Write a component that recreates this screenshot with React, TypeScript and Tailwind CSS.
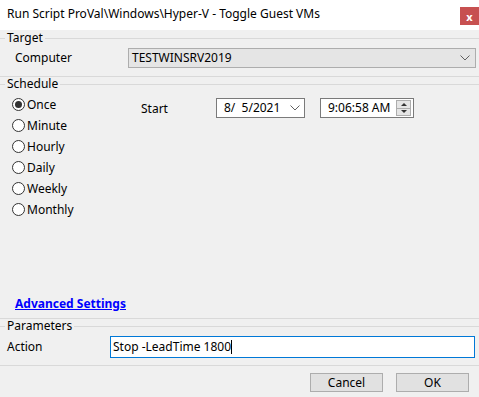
import React from 'react';

const font = { fontFamily: '"Noto Sans", "Open Sans", Arial, sans-serif' };

const Chevron = ({ className = '' }: { className?: string }) => (
  <svg width="10" height="6" viewBox="0 0 10 6" className={className}>
    <polyline points="0.5,0.5 5,5 9.5,0.5" fill="none" stroke="#606060" strokeWidth="1" />
  </svg>
);

const GroupHeader = ({ label }: { label: string }) => (
  <div className="flex items-center h-[14px]">
    <div className="w-[5px] border-t border-[#d9d9d9]" />
    <span className="px-[2px] text-[12px] leading-none text-black">{label}</span>
    <div className="flex-1 border-t border-[#d9d9d9]" />
  </div>
);

const Radio = ({ label, checked = false }: { label: string; checked?: boolean }) => (
  <div className="flex items-center h-[21px] gap-[2px]">
    <div className="w-[13px] h-[13px] rounded-full border border-[#333] bg-white flex items-center justify-center">
      {checked && <div className="w-[7px] h-[7px] rounded-full bg-[#333]" />}
    </div>
    <span className="text-[12px] leading-none">{label}</span>
  </div>
);

export default function App() {
  const schedules = ['Once', 'Minute', 'Hourly', 'Daily', 'Weekly', 'Monthly'];

  return (
    <div className="w-[479px] h-[397px] bg-[#f0f0f0] overflow-hidden text-black" style={font}>
      {/* Title bar */}
      <div className="h-[30px] bg-white flex items-start">
        <div className="flex-1 pl-[7px] pt-[8px] text-[12px] leading-none">
          Run Script ProVal\Windows\Hyper-V - Toggle Guest VMs
        </div>
        <div className="mt-[7px] w-[19px] h-[18px] bg-[#c75050] flex items-center justify-center text-white text-[11px] font-bold leading-none">
          x
        </div>
      </div>

      {/* Target */}
      <div className="pt-[1px]">
        <GroupHeader label="Target" />
      </div>
      <div className="flex items-center mt-[3px] h-[20px]">
        <span className="w-[128px] pl-[15px] text-[12px] leading-none">Computer</span>
        <div className="w-[348px] h-[20px] bg-[#e5e5e5] border border-[#adadad] flex items-center justify-between pl-[3px] pr-[5px]">
          <span className="text-[12px] leading-none">TESTWINSRV2019</span>
          <Chevron />
        </div>
      </div>
      <div className="mt-[8px] border-t border-[#d9d9d9]" />

      {/* Schedule */}
      <GroupHeader label="Schedule" />
      <div className="h-[227px] flex flex-col">
        <div className="flex flex-1">
          <div className="w-[129px] pl-[12px] pt-[3px]">
            {schedules.map((s, i) => (
              <Radio key={s} label={s} checked={i === 0} />
            ))}
          </div>
          <div className="flex items-start pt-[7px]">
            <span className="w-[87px] pl-[12px] pt-[5px] text-[12px] leading-none">Start</span>
            <div className="w-[89px] h-[20px] bg-white border border-[#7a7a7a] flex items-center justify-between pl-[7px] pr-[4px]">
              <span className="text-[12px] leading-none whitespace-pre">8/  5/2021</span>
              <Chevron />
            </div>
            <div className="ml-[15px] w-[94px] h-[20px] bg-white border border-[#7a7a7a] flex items-center justify-between pl-[7px] pr-[2px]">
              <span className="text-[12px] leading-none">9:06:58 AM</span>
              <div className="w-[15px] h-[16px] flex flex-col border border-[#adadad]">
                <div className="flex-1 bg-[#e5e5e5] border-b border-[#adadad] flex items-center justify-center">
                  <svg width="6" height="3" viewBox="0 0 6 3"><polygon points="0,3 3,0 6,3" fill="#333" /></svg>
                </div>
                <div className="flex-1 bg-[#e5e5e5] flex items-center justify-center">
                  <svg width="6" height="3" viewBox="0 0 6 3"><polygon points="0,0 6,0 3,3" fill="#333" /></svg>
                </div>
              </div>
            </div>
          </div>
        </div>
        <div className="pl-[15px] pb-[4px]">
          <span className="text-[12px] leading-none font-bold text-[#0000ff] underline">Advanced Settings</span>
        </div>
      </div>
      <div className="border-t border-[#d9d9d9]" />

      {/* Parameters */}
      <GroupHeader label="Parameters" />
      <div className="flex items-center mt-[3px] h-[22px]">
        <span className="w-[110px] pl-[7px] text-[12px] leading-none">Action</span>
        <div className="w-[365px] h-[22px] bg-white border border-[#0078d7] flex items-center pl-[2px]">
          <span className="text-[12px] leading-none">Stop -LeadTime 1800</span>
          <span className="w-[1px] h-[14px] bg-black" />
        </div>
      </div>
      <div className="mt-[7px] border-t border-[#d9d9d9]" />

      {/* Buttons */}
      <div className="flex justify-end gap-[13px] pr-[10px] mt-[7px]">
        <button className="w-[73px] h-[19px] bg-[#e1e1e1] border border-[#adadad] text-[12px] leading-none">Cancel</button>
        <button className="w-[73px] h-[19px] bg-[#e1e1e1] border border-[#adadad] text-[12px] leading-none">OK</button>
      </div>
    </div>
  );
}
